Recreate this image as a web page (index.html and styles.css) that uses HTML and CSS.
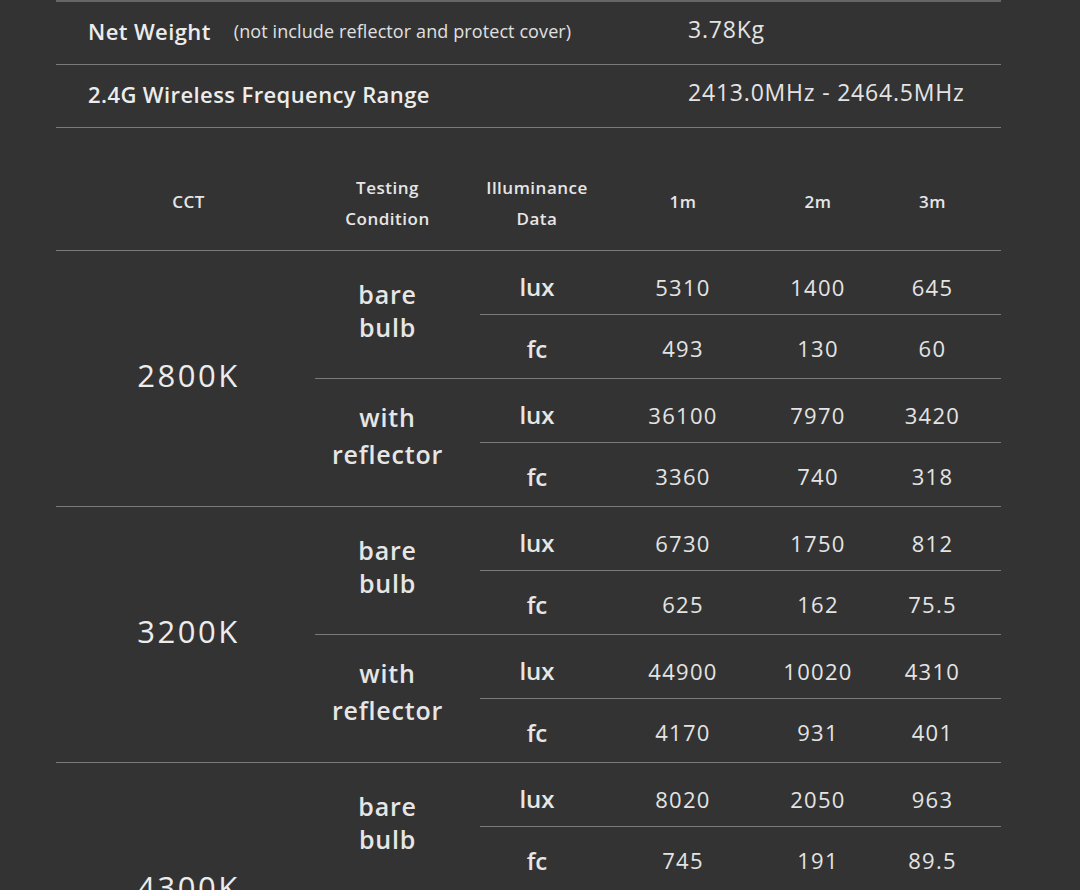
FILE: index.html
```html
<!DOCTYPE html>
<html lang="en">
<head>
<meta charset="utf-8">
<title>Specifications</title>
<link rel="stylesheet" href="styles.css">
</head>
<body>
<main class="page">
  <section class="specs">
    <div class="spec-row">
      <div class="spec-label"><span class="spec-name">Net Weight</span><span class="spec-note">(not include reflector and protect cover)</span></div>
      <div class="spec-value">3.78Kg</div>
    </div>
    <div class="spec-row">
      <div class="spec-label"><span class="spec-name">2.4G Wireless Frequency Range</span></div>
      <div class="spec-value">2413.0MHz - 2464.5MHz</div>
    </div>
  </section>

  <table class="lux-table">
    <colgroup>
      <col class="c-cct"><col class="c-cond"><col class="c-unit"><col class="c-1m"><col class="c-2m"><col class="c-3m">
    </colgroup>
    <thead>
      <tr>
        <th class="h-cct single">CCT</th>
        <th class="h-cond">Testing<br>Condition</th>
        <th>Illuminance<br>Data</th>
        <th class="single">1m</th>
        <th class="single">2m</th>
        <th class="single">3m</th>
      </tr>
    </thead>
    <tbody>
      <tr>
        <td class="cct" rowspan="4">2800K</td>
        <td class="cond" rowspan="2">bare<br>bulb</td>
        <td class="unit">lux</td><td class="num">5310</td><td class="num">1400</td><td class="num">645</td>
      </tr>
      <tr class="fc-row"><td class="unit">fc</td><td class="num">493</td><td class="num">130</td><td class="num">60</td></tr>
      <tr>
        <td class="cond cond-wide" rowspan="2">with<br>reflector</td>
        <td class="unit">lux</td><td class="num">36100</td><td class="num">7970</td><td class="num">3420</td>
      </tr>
      <tr class="fc-row"><td class="unit">fc</td><td class="num">3360</td><td class="num">740</td><td class="num">318</td></tr>

      <tr>
        <td class="cct" rowspan="4">3200K</td>
        <td class="cond" rowspan="2">bare<br>bulb</td>
        <td class="unit">lux</td><td class="num">6730</td><td class="num">1750</td><td class="num">812</td>
      </tr>
      <tr class="fc-row"><td class="unit">fc</td><td class="num">625</td><td class="num">162</td><td class="num">75.5</td></tr>
      <tr>
        <td class="cond cond-wide" rowspan="2">with<br>reflector</td>
        <td class="unit">lux</td><td class="num">44900</td><td class="num">10020</td><td class="num">4310</td>
      </tr>
      <tr class="fc-row"><td class="unit">fc</td><td class="num">4170</td><td class="num">931</td><td class="num">401</td></tr>

      <tr>
        <td class="cct" rowspan="4">4300K</td>
        <td class="cond" rowspan="2">bare<br>bulb</td>
        <td class="unit">lux</td><td class="num">8020</td><td class="num">2050</td><td class="num">963</td>
      </tr>
      <tr class="fc-row"><td class="unit">fc</td><td class="num">745</td><td class="num">191</td><td class="num">89.5</td></tr>
      <tr>
        <td class="cond cond-wide" rowspan="2">with<br>reflector</td>
        <td class="unit">lux</td><td class="num"></td><td class="num"></td><td class="num"></td>
      </tr>
      <tr class="fc-row"><td class="unit">fc</td><td class="num"></td><td class="num"></td><td class="num"></td></tr>
    </tbody>
  </table>
</main>
</body>
</html>
```
FILE: styles.css
```css
html, body {
  margin: 0;
  padding: 0;
  background: #333333;
}

body {
  color: #e8e8e8;
  font-family: "Open Sans", Lato, "Liberation Sans", sans-serif;
  overflow: hidden;
}

.page {
  width: 945px;
  margin-left: 56px;
}

.specs {
  border-top: 2px solid #666666;
}

.spec-row {
  display: grid;
  grid-template-columns: 632px 1fr;
  align-items: center;
  height: 62px;
  border-bottom: 1px solid #7a7a7a;
}

.spec-label {
  padding-left: 32px;
  display: flex;
  align-items: baseline;
  gap: 23px;
  margin-top: -4px;
}

.spec-name {
  font-size: 22px;
  font-weight: 600;
  letter-spacing: 0.4px;
  color: #ececec;
}

.spec-note {
  font-size: 18px;
  font-weight: 400;
  letter-spacing: 0.1px;
  color: #e0e0e0;
  position: relative;
  top: -2px;
}

.spec-value {
  font-size: 23px;
  font-weight: 400;
  letter-spacing: 0.8px;
  color: #e4e4e4;
  margin-top: -9px;
}

.lux-table {
  margin-top: 28px;
  width: 945px;
  table-layout: fixed;
  border-collapse: collapse;
}

.c-cct { width: 259px; }
.c-cond { width: 165px; }
.c-unit { width: 114px; }
.c-1m { width: 178px; }
.c-2m { width: 92px; }
.c-3m { width: 137px; }

.lux-table th {
  height: 94px;
  padding: 0;
  font-size: 17px;
  font-weight: 600;
  letter-spacing: 0.5px;
  line-height: 31px;
  color: #e6e6e6;
  text-align: center;
  vertical-align: middle;
  border-bottom: 1px solid #7a7a7a;
}

.lux-table th.single { padding-bottom: 4px; height: 90px; }
.lux-table th.h-cct { padding-left: 6px; }
.lux-table th.h-cond { padding-right: 20px; }

.lux-table td {
  padding: 0;
  text-align: center;
  vertical-align: middle;
  border-bottom: 1px solid #7a7a7a;
  height: 55px;
}

.lux-table td.cct {
  font-size: 31px;
  font-weight: 400;
  letter-spacing: 2.5px;
  color: #ececec;
  padding-left: 6px;
  padding-bottom: 8px;
}

.lux-table td.cond {
  font-size: 25px;
  font-weight: 600;
  letter-spacing: 0.8px;
  line-height: 33px;
  color: #e6e6e6;
  padding-right: 20px;
  padding-bottom: 8px;
}

.lux-table td.cond-wide {
  line-height: 37px;
  padding-bottom: 14px;
}

.lux-table td.unit {
  font-size: 24px;
  font-weight: 600;
  color: #e6e6e6;
  padding-top: 8px;
}

.lux-table td.num {
  font-size: 22px;
  font-weight: 400;
  letter-spacing: 1.3px;
  color: #e4e4e4;
  padding-top: 8px;
}

.lux-table .fc-row td.unit,
.lux-table .fc-row td.num {
  padding-top: 3px;
  height: 60px;
}
```
